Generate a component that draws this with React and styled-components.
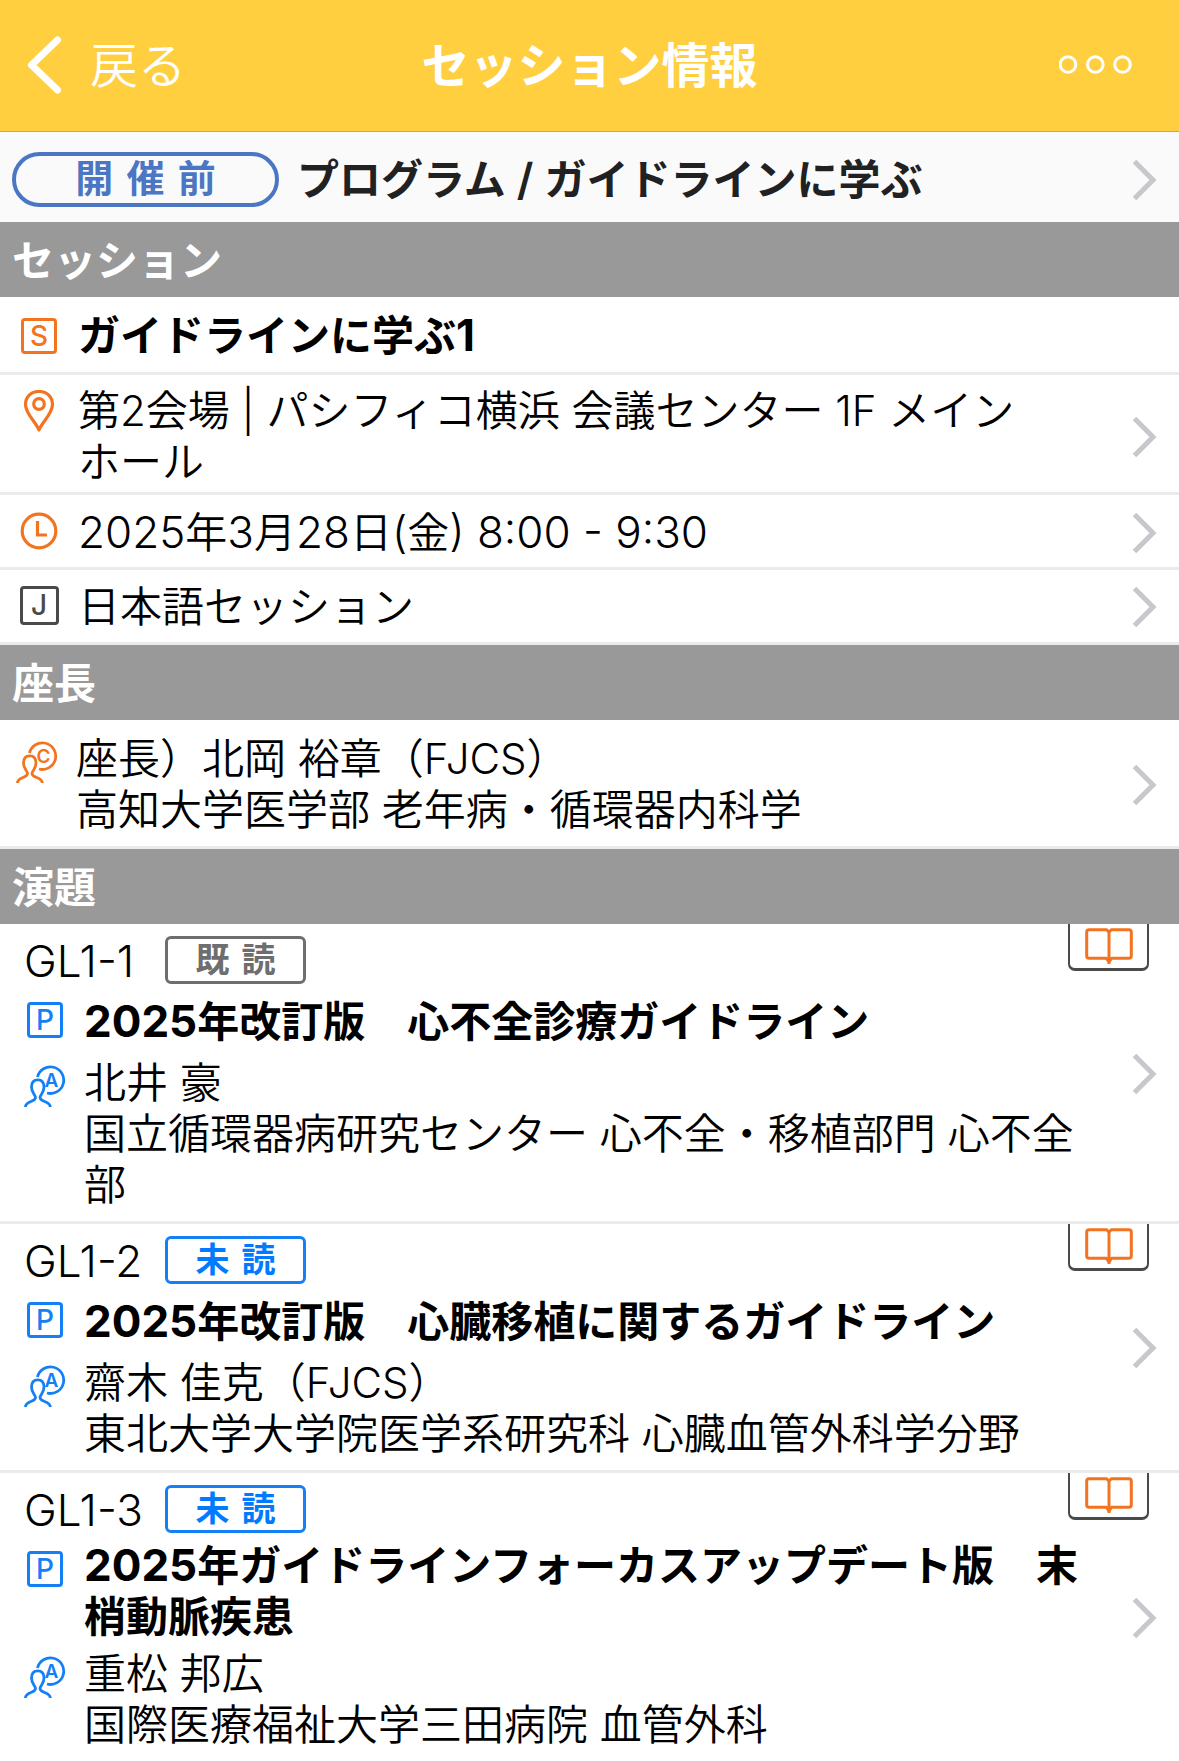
import React from "react";
import styled, { createGlobalStyle, css } from "styled-components";

const GlobalStyle = createGlobalStyle`
  * { box-sizing: border-box; }
  html, body { margin: 0; padding: 0; }
  body {
    background: #fff;
    color: #000;
    font-family: Inter, "Noto Sans CJK JP", sans-serif;
    font-size: 42px;
    font-weight: 350;
    line-height: 51px;
    line-break: strict;
  }
`;

const orange = "#f27420";
const blue = "#1580f5";
const ink = "#4a4a4a";

const Screen = styled.div`
  display: flex;
  flex-direction: column;
  height: 100vh;
`;

const Header = styled.header`
  flex: none;
  display: grid;
  grid-template-columns: 1fr auto 1fr;
  align-items: center;
  height: 132px;
  padding: 0 27px;
  background: #ffcf40;
  border-bottom: 1px solid #b9a878;
  color: #fff;
  font-size: 48px;
`;

const HeaderButton = styled.button`
  display: flex;
  align-items: center;
  justify-self: ${(p) => (p.$end ? "end" : "start")};
  gap: 27px;
  padding: ${(p) => (p.$end ? "0 18px" : 0)};
  border: 0;
  background: none;
  color: inherit;
  font: inherit;
`;

const Title = styled.h1`
  margin: 0;
  font-size: 48px;
  font-weight: 600;
`;

const Content = styled.main`
  flex: 1;
  min-height: 0;
  overflow-y: auto;
  scrollbar-width: none;
`;

const rowBase = css`
  display: flex;
  color: inherit;
  text-decoration: none;
`;

const ProgramRow = styled.a`
  ${rowBase}
  align-items: center;
  gap: 18px;
  height: 90px;
  padding: 5px 21px 0 12px;
  background: #fafafa;
  color: #1f2123;
  font-weight: 600;
`;

const ProgramName = styled.span`
  flex: 1;
`;

const StatusPill = styled.span`
  display: flex;
  align-items: center;
  justify-content: center;
  width: 267px;
  height: 55px;
  border: 4px solid #4a76c4;
  border-radius: 28px;
  color: #4a76c4;
  font-family: "DejaVu Sans", "Noto Sans CJK JP", sans-serif;
  font-size: 38px;
  font-weight: 600;
`;

const SectionBar = styled.h2`
  display: flex;
  align-items: center;
  height: 75px;
  margin: 0;
  padding: 2px 12px 0;
  background: #999;
  color: #fff;
  font-size: 42px;
  font-weight: 600;
`;

const InfoRow = styled.a`
  ${rowBase}
  gap: 18px;
  padding: ${(p) => p.$pad};
  border-bottom: 3px solid #ebebeb;
  font-weight: ${(p) => (p.$bold ? 700 : "inherit")};
`;

const Text = styled.div`
  flex: 1;
  padding-right: ${(p) => (p.$inset ? "36px" : 0)};
`;

const LatinRun = styled.span`
  font-size: 44px;
  line-height: 1;
`;

const IconSlot = styled.span`
  flex: none;
  display: flex;
  align-items: center;
  justify-content: center;
  width: 42px;
  height: 42px;
  margin-top: ${(p) => p.$top}px;
`;

const LetterBox = styled.span`
  display: flex;
  align-items: center;
  justify-content: center;
  width: ${(p) => p.$size}px;
  height: ${(p) => p.$size}px;
  border: 3px solid ${(p) => p.$color};
  border-radius: 4px;
  color: ${(p) => p.$color};
  font-size: 28px;
  font-weight: 500;
  line-height: 30px;
`;

const ArrowSlot = styled.span`
  flex: none;
  align-self: center;
  display: flex;
  padding-top: 1px;
`;

const Item = styled.a`
  ${rowBase}
  position: relative;
  padding: 12px 21px 11px 24px;
  border-bottom: 3px solid #ebebeb;
`;

const ItemBody = styled.div`
  flex: 1;
  display: flex;
  flex-direction: column;
  gap: 6px;
`;

const CodeLine = styled.div`
  display: flex;
  align-items: flex-start;
  height: 49px;
`;

const Code = styled.span`
  width: 141px;
`;

const ReadBadge = styled.span`
  display: flex;
  align-items: center;
  justify-content: center;
  width: 141px;
  height: 48px;
  border: 3px solid ${(p) => (p.$read ? "#6e6e6e" : blue)};
  border-radius: 6px;
  color: ${(p) => (p.$read ? "#6e6e6e" : "#007aff")};
  font-family: "DejaVu Sans", "Noto Sans CJK JP", sans-serif;
  font-size: 34px;
  font-weight: 700;
`;

const ItemLine = styled.div`
  display: flex;
  gap: 18px;
`;

const ItemTitle = styled(ItemLine)`
  min-height: 60px;
  font-weight: 700;
`;

const TitleText = styled(Text)`
  align-self: center;
`;

const BookTab = styled.span`
  position: absolute;
  top: 0;
  right: 30px;
  display: flex;
  justify-content: center;
  width: 81px;
  height: 47px;
  padding-top: 4px;
  border: solid ${ink};
  border-width: 0 2px 3px;
  border-radius: 0 0 7px 7px;
`;

// Letters and digits run slightly larger than the kana and kanji around them.
function Mixed({ children }) {
  return children
    .split(/([\x20-\x7e]+)/)
    .map((part, i) => (i % 2 ? <LatinRun key={i}>{part}</LatinRun> : part));
}

function Arrow() {
  return (
    <ArrowSlot>
      <svg width="26" height="40" viewBox="0 0 26 40" fill="none" stroke="#c7c7cc" strokeWidth="5">
        <path d="M2.5 1.500 L21 20 L2.5 38.500" />
      </svg>
    </ArrowSlot>
  );
}

function BackIcon() {
  return (
    <svg width="36" height="60" viewBox="0 0 36 60" fill="none" stroke="#fff" strokeWidth="7" strokeLinecap="round" strokeLinejoin="round">
      <path d="M30.5 4 L4.500 29 L30.5 54" />
    </svg>
  );
}

function MoreIcon() {
  return (
    <svg width="75" height="24" viewBox="0 0 75 24" fill="none" stroke="#fff" strokeWidth="3">
      <circle cx="9" cy="10.500" r="7.800" />
      <circle cx="36.300" cy="10.500" r="7.800" />
      <circle cx="63.500" cy="10.500" r="7.800" />
    </svg>
  );
}

function PinIcon() {
  return (
    <svg width="42" height="42" viewBox="0 0 42 42" fill="none" stroke={orange} strokeWidth="3.200">
      <path d="M21 40 C18 32 7.500 24 7.500 14.500 C7.500 7 13 1.500 21 1.500 C29 1.500 34.500 7 34.500 14.500 C34.500 24 24 32 21 40 Z" strokeLinejoin="round" />
      <circle cx="21" cy="14" r="5.300" />
    </svg>
  );
}

function ClockIcon() {
  return (
    <svg width="42" height="42" viewBox="0 0 42 42" fill="none" stroke={orange} strokeWidth="3.200">
      <circle cx="21" cy="21" r="16.800" />
      <path d="M19.500 11 V25 H29" />
    </svg>
  );
}

function PersonIcon({ letter, color }) {
  return (
    <svg width="42" height="42" viewBox="0 0 42 42" fill="none" stroke={color} strokeWidth="2.800">
      <path d="M13.500 12 A13.300 13.300 0 1 1 23 28" />
      <path d="M1.400 42 C1.400 35.500 11.500 37.500 11.500 32.500 C11.500 30 7.500 28 7.500 22 C7.500 17.500 9.800 14.800 13.800 14.800 C17.800 14.800 20 17.500 20 22 C20 28 16 30 16 32.500 C16 37.500 26.300 35.500 26.300 42" />
      <text x="27.500" y="21.500" textAnchor="middle" fontFamily="Inter, sans-serif" fontSize="19" fontWeight="600" fill={color} stroke="none">
        {letter}
      </text>
    </svg>
  );
}

function BookIcon() {
  return (
    <svg width="48" height="37" viewBox="0 0 48 37" fill="none" stroke={orange} strokeWidth="3" strokeLinejoin="round">
      <path d="M24 4 L21.500 1.700 H4 Q1.700 1.700 1.700 4 V28 Q1.700 30.300 4 30.300 H21.500 L24 34 L26.500 30.300 H44 Q46.300 30.300 46.300 28 V4 Q46.300 1.700 44 1.700 H26.500 Z" />
      <path d="M24 4 V36" />
    </svg>
  );
}

const items = [
  {
    code: "GL1-1",
    read: true,
    title: "2025年改訂版　心不全診療ガイドライン",
    author: "北井 豪",
    affiliation: "国立循環器病研究センター 心不全・移植部門 心不全部",
  },
  {
    code: "GL1-2",
    read: false,
    title: "2025年改訂版　心臓移植に関するガイドライン",
    author: "齋木 佳克（FJCS）",
    affiliation: "東北大学大学院医学系研究科 心臓血管外科学分野",
  },
  {
    code: "GL1-3",
    read: false,
    title: "2025年ガイドラインフォーカスアップデート版　末梢動脈疾患",
    author: "重松 邦広",
    affiliation: "国際医療福祉大学三田病院 血管外科",
  },
];

function Presentation({ item }) {
  return (
    <Item href="#">
      <ItemBody>
        <CodeLine>
          <Code><Mixed>{item.code}</Mixed></Code>
          <ReadBadge $read={item.read}>{item.read ? "既 読" : "未 読"}</ReadBadge>
        </CodeLine>
        <ItemTitle>
          <IconSlot $top={8}>
            <LetterBox $size={36} $color={blue}>P</LetterBox>
          </IconSlot>
          <TitleText $inset><Mixed>{item.title}</Mixed></TitleText>
        </ItemTitle>
        <ItemLine>
          <IconSlot $top={8}>
            <PersonIcon letter="A" color={blue} />
          </IconSlot>
          <Text $inset>
            <div>{item.author}</div>
            <div>{item.affiliation}</div>
          </Text>
        </ItemLine>
      </ItemBody>
      <Arrow />
      <BookTab>
        <BookIcon />
      </BookTab>
    </Item>
  );
}

export default function App() {
  return (
    <Screen lang="ja">
      <GlobalStyle />
      <Header>
        <HeaderButton type="button">
          <BackIcon />
          戻る
        </HeaderButton>
        <Title>セッション情報</Title>
        <HeaderButton type="button" $end aria-label="メニュー">
          <MoreIcon />
        </HeaderButton>
      </Header>
      <Content>
        <ProgramRow href="#">
          <StatusPill>開 催 前</StatusPill>
          <ProgramName><Mixed>プログラム / ガイドラインに学ぶ</Mixed></ProgramName>
          <Arrow />
        </ProgramRow>

        <SectionBar>セッション</SectionBar>
        <InfoRow as="div" $pad="13px 21px 11px 18px" $bold>
          <IconSlot $top={5}>
            <LetterBox $size={36} $color={orange}>S</LetterBox>
          </IconSlot>
          <Text><Mixed>ガイドラインに学ぶ1</Mixed></Text>
        </InfoRow>
        <InfoRow href="#" $pad="10px 21px 5px 18px">
          <IconSlot $top={5}>
            <PinIcon />
          </IconSlot>
          <Text $inset>第2会場 | パシフィコ横浜 会議センター 1F メインホール</Text>
          <Arrow />
        </InfoRow>
        <InfoRow href="#" $pad="12px 21px 9px 18px">
          <IconSlot $top={3}>
            <ClockIcon />
          </IconSlot>
          <Text><Mixed>2025年3月28日(金) 8:00 - 9:30</Mixed></Text>
          <Arrow />
        </InfoRow>
        <InfoRow href="#" $pad="11px 21px 10px 18px">
          <IconSlot $top={3}>
            <LetterBox $size={39} $color={ink}>J</LetterBox>
          </IconSlot>
          <Text>日本語セッション</Text>
          <Arrow />
        </InfoRow>

        <SectionBar>座長</SectionBar>
        <InfoRow href="#" $pad="13px 21px 11px 16px">
          <IconSlot $top={8}>
            <PersonIcon letter="C" color={orange} />
          </IconSlot>
          <Text $inset>
            <div>座長）北岡 裕章（FJCS）</div>
            <div>高知大学医学部 老年病・循環器内科学</div>
          </Text>
          <Arrow />
        </InfoRow>

        <SectionBar>演題</SectionBar>
        {items.map((item) => (
          <Presentation key={item.code} item={item} />
        ))}
      </Content>
    </Screen>
  );
}
